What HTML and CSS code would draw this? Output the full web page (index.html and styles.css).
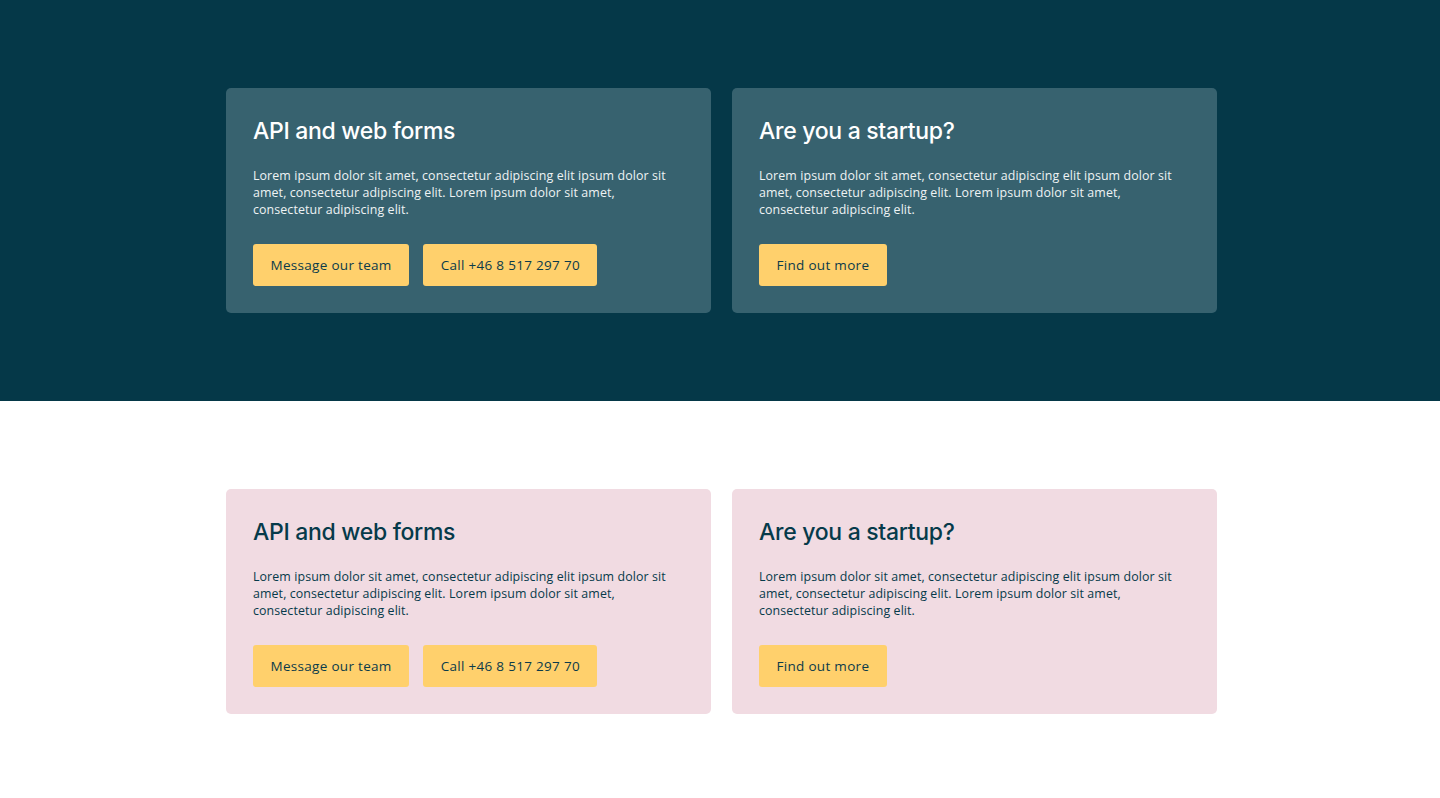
FILE: index.html
```html
<!DOCTYPE html>
<html lang="en">
<head>
<meta charset="utf-8">
<title>Contact cards</title>
<link rel="stylesheet" href="styles.css">
</head>
<body>
  <section class="band band-dark">
    <div class="cards">
      <article class="card card-dark">
        <h2 class="card-title">API and web forms</h2>
        <p class="card-text">Lorem ipsum dolor sit amet, consectetur adipiscing elit ipsum dolor sit amet, consectetur adipiscing elit. Lorem ipsum dolor sit amet, consectetur adipiscing elit.</p>
        <div class="actions">
          <a class="btn" href="#">Message our team</a>
          <a class="btn" href="#">Call +46 8 517 297 70</a>
        </div>
      </article>
      <article class="card card-dark">
        <h2 class="card-title">Are you a startup?</h2>
        <p class="card-text">Lorem ipsum dolor sit amet, consectetur adipiscing elit ipsum dolor sit amet, consectetur adipiscing elit. Lorem ipsum dolor sit amet, consectetur adipiscing elit.</p>
        <div class="actions">
          <a class="btn" href="#">Find out more</a>
        </div>
      </article>
    </div>
  </section>
  <section class="band band-light">
    <div class="cards">
      <article class="card card-pink">
        <h2 class="card-title">API and web forms</h2>
        <p class="card-text">Lorem ipsum dolor sit amet, consectetur adipiscing elit ipsum dolor sit amet, consectetur adipiscing elit. Lorem ipsum dolor sit amet, consectetur adipiscing elit.</p>
        <div class="actions">
          <a class="btn" href="#">Message our team</a>
          <a class="btn" href="#">Call +46 8 517 297 70</a>
        </div>
      </article>
      <article class="card card-pink">
        <h2 class="card-title">Are you a startup?</h2>
        <p class="card-text">Lorem ipsum dolor sit amet, consectetur adipiscing elit ipsum dolor sit amet, consectetur adipiscing elit. Lorem ipsum dolor sit amet, consectetur adipiscing elit.</p>
        <div class="actions">
          <a class="btn" href="#">Find out more</a>
        </div>
      </article>
    </div>
  </section>
</body>
</html>
```

FILE: styles.css
```css
* { box-sizing: border-box; }
html, body { margin: 0; padding: 0; }
body {
  font-family: "Open Sans", "Noto Sans", sans-serif;
  background: #ffffff;
}
.band {
  padding: 88px 0;
}
.band-dark { background: #053848; }
.band-light { background: #ffffff; }
.cards {
  display: grid;
  grid-template-columns: 485px 485px;
  gap: 21px;
  width: 991px;
  margin-left: calc(50% - 494px);
}
.card {
  border-radius: 5px;
  padding: 27px 27px 27px;
  height: 225px;
}
.card-dark { background: #37626f; color: #ffffff; }
.card-pink { background: #f1dbe2; color: #063a4a; }
.card-title {
  margin: 0;
  font-family: "Inter", "Liberation Sans", sans-serif;
  font-weight: 500;
  font-size: 23px;
  line-height: 32px;
  letter-spacing: -0.3px;
}
.card-text {
  margin: 20px 0 0;
  font-size: 12.4px;
  line-height: 17px;
  letter-spacing: 0.1px;
}
.card-dark .card-text { color: #eef3f4; }
.actions {
  display: flex;
  gap: 14px;
  margin-top: 26px;
}
.btn {
  display: inline-flex;
  align-items: center;
  height: 42px;
  padding: 0 17.5px;
  background: #ffd06c;
  color: #0b3b4a;
  border-radius: 3px;
  font-size: 13.5px;
  text-decoration: none;
  letter-spacing: 0.3px;
}
```
